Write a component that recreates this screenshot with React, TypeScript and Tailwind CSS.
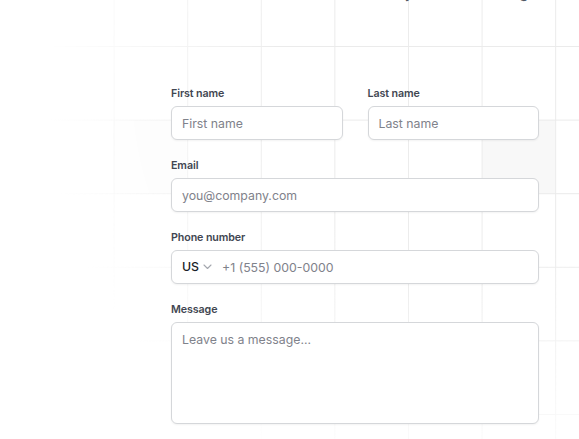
import React from "react";

function Label({ children }: { children: React.ReactNode }) {
  return (
    <label className="block text-[10.7px] leading-[15px] font-semibold text-[#414651] tracking-[-0.1px]">
      {children}
    </label>
  );
}

const inputCls =
  "block w-full h-[34px] rounded-[6px] border border-[#d5d7da] bg-white px-[10px] text-[12.3px] text-[#181d27] placeholder:text-[#7f828b] shadow-[0_1px_2px_rgba(10,13,18,0.05)] outline-none";

export default function App() {
  return (
    <div className="relative w-full h-[439px] overflow-hidden bg-white font-['Inter',sans-serif]">
      <div className="pointer-events-none absolute inset-0 [mask-image:radial-gradient(ellipse_72%_95%_at_80%_20%,black_45%,transparent_100%)]">
        <div className="h-full w-full bg-[linear-gradient(#f8f8f8,#f8f8f8),linear-gradient(#fbfbfb,#fbfbfb)] bg-[size:73.6px_73.6px,73.6px_73.6px] bg-[position:482px_120px,113px_120px] bg-no-repeat" />
      </div>
      <div className="pointer-events-none absolute inset-0 [mask-image:radial-gradient(ellipse_72%_95%_at_80%_20%,black_45%,transparent_100%)]">
        <div className="h-full w-full bg-[linear-gradient(to_right,#ebebeb_1px,transparent_1px),linear-gradient(to_bottom,#ebebeb_1px,transparent_1px)] bg-[size:73.6px_73.6px] bg-[position:40px_46px]" />
      </div>

      <div className="relative flex flex-col">
        <div className="-mt-[17px] h-5 pl-[272px] whitespace-nowrap text-[15px] leading-5 text-[#535862]">
          Reach our team any time and we'll get back to you soon.
        </div>

        <form className="mt-[83px] ml-[171px] w-[368px] flex flex-col gap-[18px]">
          <div className="grid grid-cols-2 gap-x-[25px]">
            <div className="flex flex-col gap-[5px]">
              <Label>First name</Label>
              <input className={inputCls} placeholder="First name" />
            </div>
            <div className="flex flex-col gap-[5px]">
              <Label>Last name</Label>
              <input className={inputCls} placeholder="Last name" />
            </div>
          </div>

          <div className="flex flex-col gap-[5px]">
            <Label>Email</Label>
            <input className={inputCls} placeholder="you@company.com" />
          </div>

          <div className="flex flex-col gap-[5px]">
            <Label>Phone number</Label>
            <div className="flex h-[34px] items-center rounded-[6px] border border-[#d5d7da] bg-white pl-[10px] shadow-[0_1px_2px_rgba(10,13,18,0.05)]">
              <span className="text-[12.3px] font-medium text-[#181d27]">US</span>
              <svg className="ml-[4px]" width="9" height="6" viewBox="0 0 9 6" fill="none">
                <path d="M1 1L4.5 4.5L8 1" stroke="#a4a7ae" strokeWidth="1.1" strokeLinecap="round" strokeLinejoin="round" />
              </svg>
              <input
                className="ml-[10px] flex-1 h-full bg-transparent text-[12.3px] text-[#181d27] placeholder:text-[#7f828b] outline-none"
                placeholder="+1 (555) 000-0000"
              />
            </div>
          </div>

          <div className="flex flex-col gap-[5px]">
            <Label>Message</Label>
            <textarea
              className="block w-full h-[102px] resize-none rounded-[6px] border border-[#d5d7da] bg-white px-[10px] py-[8px] text-[12.3px] leading-[18px] text-[#181d27] placeholder:text-[#7f828b] shadow-[0_1px_2px_rgba(10,13,18,0.05)] outline-none"
              placeholder="Leave us a message..."
            />
          </div>
        </form>
      </div>
    </div>
  );
}
